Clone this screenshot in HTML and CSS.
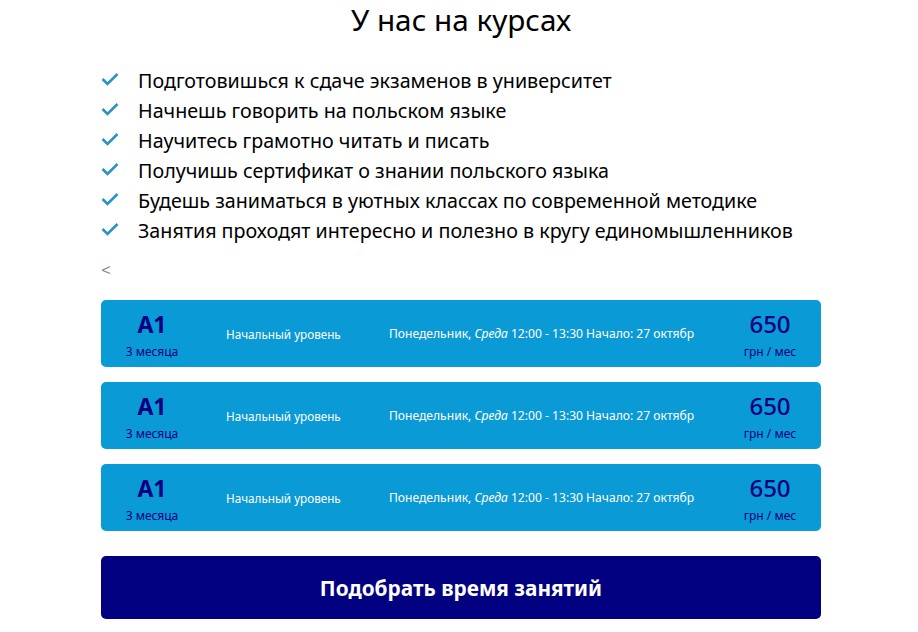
FILE: index.html
```html
<!DOCTYPE html>
<html>
    <head>
        <meta charset="utf-8">
        <title>У нас на курсах</title>
        <link rel="stylesheet" href="styles.css">
    </head>
    <body>
        <div class="wrap">
            <h2 class="title">У нас на курсах</h2>
            <ul class="benefits">
                <li><svg class="check" viewBox="0 0 18 14"><path d="M1.5 7 L6.5 12 L16.5 2"/></svg>Подготовишься к сдаче экзаменов в университет</li>
                <li><svg class="check" viewBox="0 0 18 14"><path d="M1.5 7 L6.5 12 L16.5 2"/></svg>Начнешь говорить на польском языке</li>
                <li><svg class="check" viewBox="0 0 18 14"><path d="M1.5 7 L6.5 12 L16.5 2"/></svg>Научитесь грамотно читать и писать</li>
                <li><svg class="check" viewBox="0 0 18 14"><path d="M1.5 7 L6.5 12 L16.5 2"/></svg>Получишь сертификат о знании польского языка</li>
                <li><svg class="check" viewBox="0 0 18 14"><path d="M1.5 7 L6.5 12 L16.5 2"/></svg>Будешь заниматься в уютных классах по современной методике</li>
                <li><svg class="check" viewBox="0 0 18 14"><path d="M1.5 7 L6.5 12 L16.5 2"/></svg>Занятия проходят интересно и полезно в кругу единомышленников</li>
            </ul>
            <div class="stray">&lt;</div>
            <div class="course">
                <div class="level"><b>A1</b><span>3 месяца</span></div>
                <div class="name">Начальный уровень</div>
                <div class="time">Понедельник, <i>Среда</i> 12:00 - 13:30 Начало: 27 октябр</div>
                <div class="price"><b>650</b><span>грн / мес</span></div>
            </div>
            <div class="course">
                <div class="level"><b>A1</b><span>3 месяца</span></div>
                <div class="name">Начальный уровень</div>
                <div class="time">Понедельник, <i>Среда</i> 12:00 - 13:30 Начало: 27 октябр</div>
                <div class="price"><b>650</b><span>грн / мес</span></div>
            </div>
            <div class="course">
                <div class="level"><b>A1</b><span>3 месяца</span></div>
                <div class="name">Начальный уровень</div>
                <div class="time">Понедельник, <i>Среда</i> 12:00 - 13:30 Начало: 27 октябр</div>
                <div class="price"><b>650</b><span>грн / мес</span></div>
            </div>
            <div class="pick">Подобрать время занятий</div>
        </div>
    </body>
</html>
```

FILE: styles.css
```css
body{
    margin: 0;
    color: black;
    background-color: white;
    font-family: "Comic Sans MS", "Noto Sans", sans-serif;
}
.wrap{
    width: 720px;
    margin-left: 101px;
}
.title{
    margin: 0;
    height: 62px;
    font-size: 29.7px;
    line-height: 40px;
    font-weight: normal;
    text-align: center;
}
.benefits{
    margin: 0;
    padding: 4px 0 0 0;
    list-style: none;
}
.benefits li{
    display: flex;
    align-items: center;
    height: 30px;
    font-size: 19.7px;
    line-height: 30px;
    white-space: nowrap;
}
.check{
    width: 18px;
    height: 14px;
    margin-right: 19px;
    margin-bottom: 4px;
    flex: none;
}
.check path{
    fill: none;
    stroke: #2a93c6;
    stroke-width: 2.6;
}
.stray{
    height: 47px;
    padding-top: 11px;
    box-sizing: border-box;
    margin-top: 1px;
    margin-bottom: 6px;
    font-size: 17px;
    line-height: 24px;
    color: #888888;
}
.course{
    display: flex;
    align-items: center;
    height: 67px;
    margin-bottom: 15px;
    border-radius: 5px;
    background-color: #0a9ad5;
    color: white;
    font-size: 12.1px;
}
.level, .price{
    display: flex;
    flex-direction: column;
    align-items: center;
    color: navy;
}
.level{
    width: 102px;
}
.level b, .price b{
    font-size: 23px;
    line-height: 30px;
}
.price b{
    font-size: 24px;
    font-weight: 500;
}
.level span, .price span{
    margin-top: 3px;
    margin-bottom: -3px;
    font-size: 12px;
    line-height: 20px;
}
.name{
    width: 163px;
    margin-left: 23px;
    font-size: 11.7px;
    white-space: nowrap;
}
.time{
    width: 330px;
    white-space: nowrap;
}
.price{
    width: 102px;
}
.pick{
    height: 63px;
    margin-top: 25px;
    border-radius: 5px;
    background-color: navy;
    color: white;
    font-size: 20.8px;
    font-weight: bold;
    line-height: 65px;
    text-align: center;
}
```
